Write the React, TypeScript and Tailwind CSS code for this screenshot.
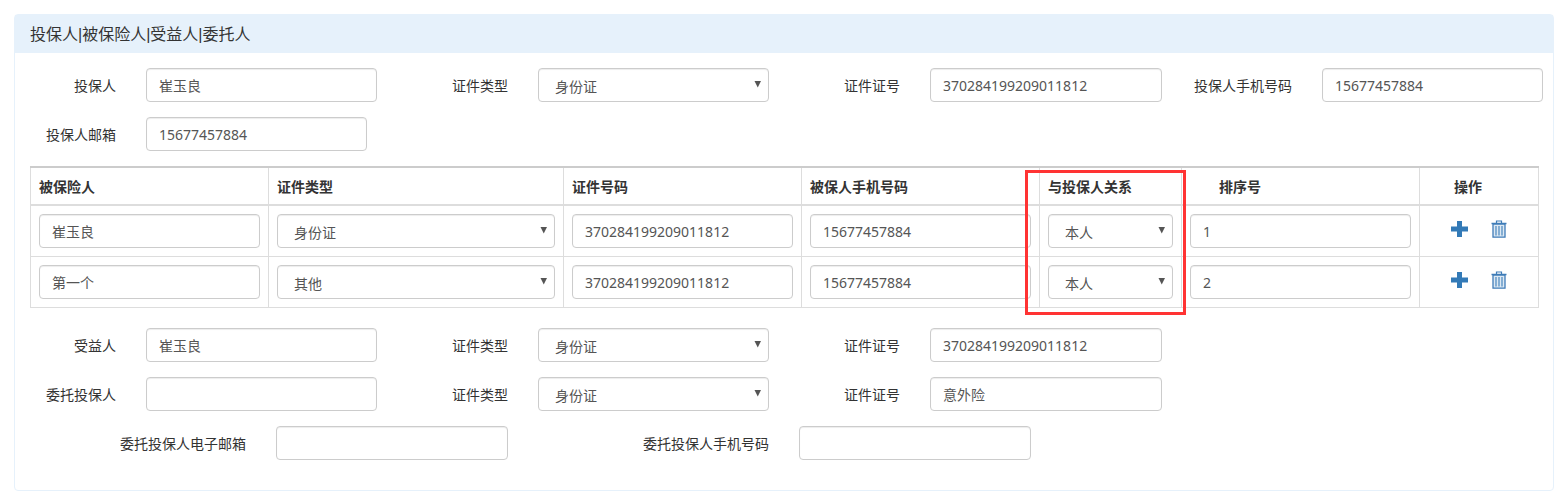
import React from "react";

const inputCls = "h-[34px] rounded-[4px] border border-[#ccc] bg-white px-[12px] text-[14px] text-[#555] outline-none shadow-[inset_0_1px_1px_rgba(0,0,0,0.075)] [font-family:'Noto_Sans','Noto_Sans_CJK_SC',sans-serif]";

function Input({ value, className }: { value?: string; className: string }) {
  return <input readOnly value={value ?? ""} className={`${inputCls} ${className}`} />;
}

function Select({ value, className }: { value: string; className: string }) {
  return (
    <div className={`relative h-[34px] rounded-[4px] border border-[#ccc] bg-white text-[14px] text-[#555] shadow-[inset_0_1px_1px_rgba(0,0,0,0.075)] ${className}`}>
      <div className="pl-[16px] pt-[6px] leading-[24px]">{value}</div>
      <svg className="absolute right-[6px] top-[11px]" width="8" height="8" viewBox="0 0 8 8">
        <path d="M0.5 1 H7 L3.75 7.5 Z" fill="#555" />
      </svg>
    </div>
  );
}

function Field({ label, children, w = "w-[392px]", lw = "w-[101px]" }: { label: string; children: React.ReactNode; w?: string; lw?: string }) {
  return (
    <div className={`flex shrink-0 items-center ${w}`}>
      <label className={`${lw} mr-[30px] shrink-0 text-right text-[14px] text-[#333]`}>{label}</label>
      {children}
    </div>
  );
}

function Plus() {
  return (
    <svg width="17" height="16" viewBox="0 0 17 16">
      <path d="M6 0 H11 V5.5 H17 V10.5 H11 V16 H6 V10.5 H0 V5.5 H6 Z" fill="#337ab7" />
    </svg>
  );
}

function Trash() {
  return (
    <svg width="16" height="18" viewBox="0 0 16 18" fill="none">
      <path d="M0.5 3.5 H15.5" stroke="#3f7cb8" strokeWidth="1.5" />
      <path d="M5.5 3 V1 H10.5 V3" stroke="#3f7cb8" strokeWidth="1.2" />
      <path d="M2 4 H14 V17.2 H2 Z" fill="#dce8f3" stroke="#3f7cb8" strokeWidth="1.3" />
      <path d="M5 6 V15.5 M8 6 V15.5 M11 6 V15.5" stroke="#4a87be" strokeWidth="1.2" />
    </svg>
  );
}

const th = "border border-[#ddd] border-b-2 border-b-[#ddd] border-t-2 border-t-[#ccc] h-[38px] text-left align-middle text-[14px] font-bold text-[#333]";
const td = "border border-[#ddd] p-[8px] align-top";

function Row({ name, type, order }: { name: string; type: string; order: string }) {
  return (
    <tr>
      <td className={td}><Input value={name} className="w-full" /></td>
      <td className={td}><Select value={type} className="w-full" /></td>
      <td className={td}><Input value="370284199209011812" className="w-full" /></td>
      <td className={td}><Input value="15677457884" className="w-full" /></td>
      <td className={td}><Select value="本人" className="w-full" /></td>
      <td className={td}><Input value={order} className="w-full" /></td>
      <td className={td}>
        <div className="flex items-start gap-[23px] pl-[23px]">
          <div className="pt-[7px]"><Plus /></div>
          <div className="pt-[6px]"><Trash /></div>
        </div>
      </td>
    </tr>
  );
}

export default function App() {
  return (
    <div className="relative h-[491px] w-[1559px] overflow-hidden bg-white pl-[14px] pt-[14px] [font-family:'Noto_Sans','Noto_Sans_CJK_SC',sans-serif]">
      <div className="h-[477px] w-[1540px] rounded-[4px] border border-[#e6f1fb]">
        <div className="flex h-[38px] items-center bg-[#e6f1fb] pl-[15px] pt-[2px] text-[16px] text-[#333] [font-family:'Liberation_Sans','Noto_Sans_CJK_SC',sans-serif]">投保人|被保险人|受益人|委托人</div>
        <div className="pt-[15px]">
          <div className="flex h-[34px]">
            <Field label="投保人"><Input value="崔玉良" className="w-[231px]" /></Field>
            <Field label="证件类型"><Select value="身份证" className="w-[231px]" /></Field>
            <Field label="证件证号"><Input value="370284199209011812" className="w-[232px]" /></Field>
            <Field label="投保人手机号码"><Input value="15677457884" className="w-[221px]" /></Field>
          </div>
          <div className="mt-[15px] flex h-[34px]">
            <Field label="投保人邮箱"><Input value="15677457884" className="w-[221px]" /></Field>
          </div>

          <table className="ml-[15px] mt-[15px] w-[1508px] table-fixed border-collapse">
            <colgroup>
              <col className="w-[238px]" />
              <col className="w-[295px]" />
              <col className="w-[238px]" />
              <col className="w-[238px]" />
              <col className="w-[142px]" />
              <col className="w-[238px]" />
              <col className="w-[119px]" />
            </colgroup>
            <thead>
              <tr>
                <th className={`${th} pl-[8px]`}>被保险人</th>
                <th className={`${th} pl-[8px]`}>证件类型</th>
                <th className={`${th} pl-[8px]`}>证件号码</th>
                <th className={`${th} pl-[8px]`}>被保人手机号码</th>
                <th className={`${th} pl-[8px]`}>与投保人关系</th>
                <th className={`${th} pl-[37px]`}>排序号</th>
                <th className={`${th} pl-[34px]`}>操作</th>
              </tr>
            </thead>
            <tbody>
              <Row name="崔玉良" type="身份证" order="1" />
              <Row name="第一个" type="其他" order="2" />
            </tbody>
          </table>

          <div className="mt-[20px] flex h-[34px]">
            <Field label="受益人"><Input value="崔玉良" className="w-[231px]" /></Field>
            <Field label="证件类型"><Select value="身份证" className="w-[231px]" /></Field>
            <Field label="证件证号"><Input value="370284199209011812" className="w-[232px]" /></Field>
          </div>
          <div className="mt-[15px] flex h-[34px]">
            <Field label="委托投保人"><Input className="w-[231px]" /></Field>
            <Field label="证件类型"><Select value="身份证" className="w-[231px]" /></Field>
            <Field label="证件证号"><Input value="意外险" className="w-[232px]" /></Field>
          </div>
          <div className="mt-[15px] flex h-[34px]">
            <Field label="委托投保人电子邮箱" w="w-[523px]" lw="w-[231px]"><Input className="w-[232px]" /></Field>
            <Field label="委托投保人手机号码" w="w-[523px]" lw="w-[231px]"><Input className="w-[232px]" /></Field>
          </div>
        </div>
      </div>
      <div className="pointer-events-none absolute left-[1025px] top-[170px] h-[145px] w-[161px] border-[3px] border-[#ff3333]" />
    </div>
  );
}
